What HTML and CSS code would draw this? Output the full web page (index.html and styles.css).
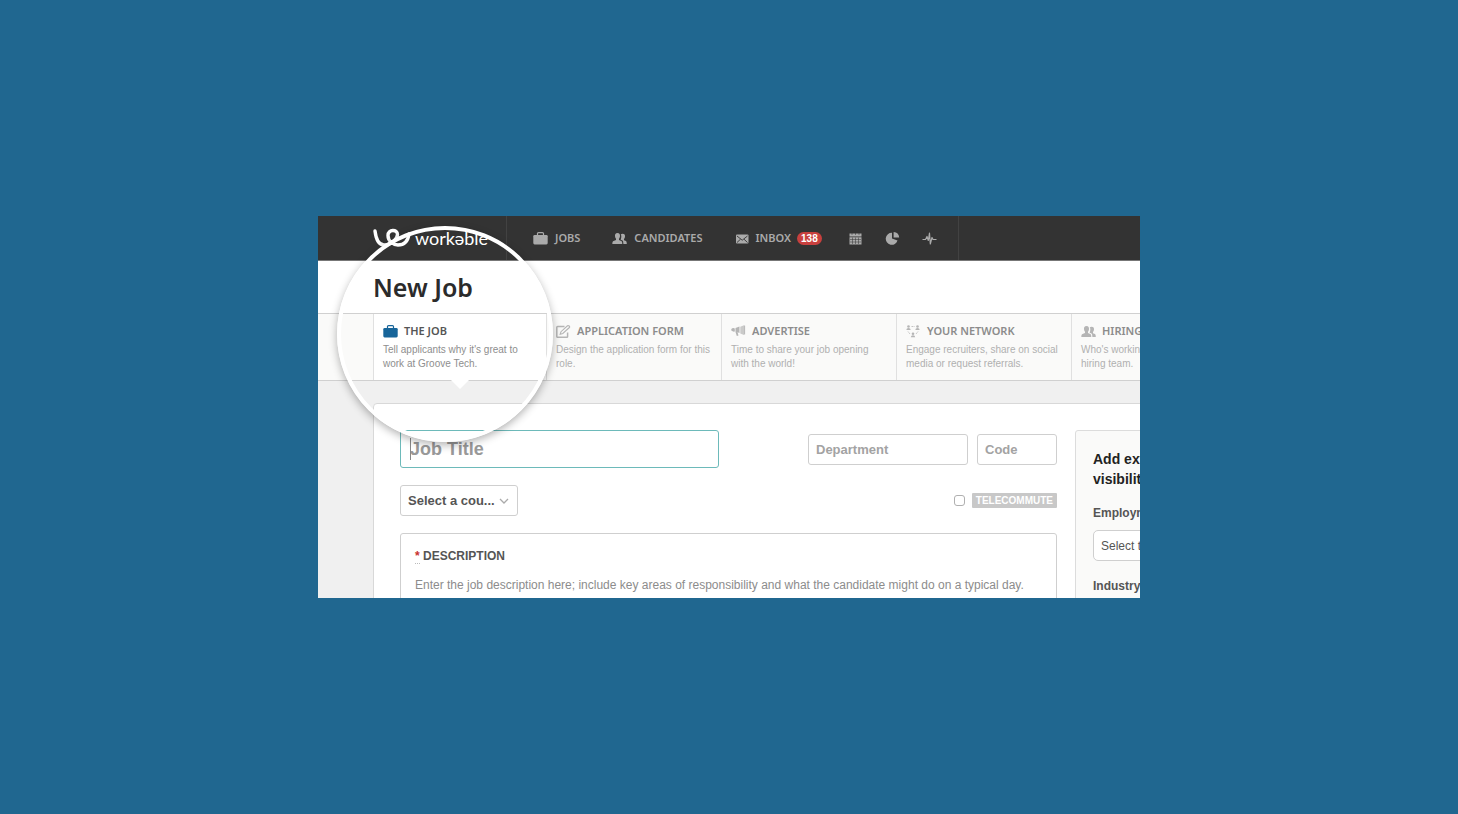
FILE: index.html
```html
<!DOCTYPE html>
<html lang="en">
<head>
<meta charset="utf-8">
<meta name="viewport" content="width=device-width, initial-scale=1">
<title>Workable – New Job</title>
<link rel="stylesheet" href="styles.css">
</head>
<body class="stage">
<svg class="sprite" aria-hidden="true">
  <symbol id="briefcase" viewBox="0 0 15 13"><path d="M4.500 3V1.600Q4.500.6 5.500.6H9.500Q10.500.6 10.500 1.600V3" fill="none" stroke="currentColor" stroke-width="1.200"/><rect x="0.300" y="3" width="14.400" height="9.400" rx="1.300" fill="currentColor"/></symbol>
  <symbol id="people" viewBox="0 0 15 13"><path fill="currentColor" d="M5.500 1C7.500 1 8.200 2.300 8 4.200C7.900 5.300 7.400 6.200 7 6.800V8L9.700 9.200Q10.300 9.600 10.300 12H.3Q.3 9.600 1 9.200L4 8V6.800C3.500 6.200 3.100 5.300 3 4.200C2.800 2.300 3.500 1 5.500 1ZM10.600 1.800C12.500 1.800 13.200 3 13 4.700C12.900 5.700 12.500 6.500 12 7V8.200L14 9.100Q14.800 9.600 14.800 12H11.400Q11.300 9.100 10.500 8.600L8.700 7.700V7.400C9 6.900 9.400 5.500 9.300 4Q9.200 2.800 8.700 2.400Q9.400 1.800 10.600 1.800Z"/></symbol>
  <symbol id="pencil" viewBox="0 0 15 13"><path d="M8.500 1.500H1.600Q.8 1.500 .8 2.300V11.500Q.8 12.300 1.600 12.300H10.800Q11.600 12.300 11.600 11.500V7.500" fill="none" stroke="currentColor" stroke-width="1.500"/><path d="M4.200 9.200L5 6.700L11.500.8Q12.300.3 13.200 1Q14 1.800 13.400 2.500L6.800 8.500Z" fill="none" stroke="currentColor" stroke-width="1.100"/></symbol>
</svg>
<main class="shot">
  <div class="app">
    <header class="topbar">
      <a class="brand" href="#">
        <svg class="brand-mark" viewBox="0 0 38 20" aria-hidden="true"><path d="M2 3C3 11 6 17 11 17C18 17 24.500 11 24.500 6.500C24.500 1 15 1 15 7.500C15 13 20 17 25 17C31 17 35 13 36 6" fill="none" stroke="currentColor" stroke-width="3.400" stroke-linecap="round"/></svg>
        <span>workəble</span>
      </a>
      <nav class="nav">
        <a class="nav-link" href="#"><svg class="icon"><use href="#briefcase"/></svg>JOBS</a>
        <a class="nav-link" href="#"><svg class="icon"><use href="#people"/></svg>CANDIDATES</a>
        <a class="nav-link" href="#"><svg class="icon" viewBox="0 0 15 13"><rect x="1" y="2.500" width="12.500" height="9" rx="1" fill="currentColor"/><path d="M2 4L7.200 8.200L12.500 4M2 10.500L5.500 7.200M12.500 10.500L9 7.200" fill="none" stroke="#333" stroke-width=".9"/></svg>INBOX<span class="badge">138</span></a>
        <a class="nav-tool" href="#" aria-label="Calendar"><svg class="icon" viewBox="0 0 15 13"><path d="M1.500 1.500H13.500V4.500H1.500ZM1.500 5.300H13.500V12.500H1.500Z" fill="currentColor"/><path d="M4 0V3M7.500 0V3M11 0V3M2 7.500H13M2 10H13M4.500 5.500V12M7.500 5.500V12M10.500 5.500V12" stroke="#333" stroke-width=".5"/></svg></a>
        <a class="nav-tool" href="#" aria-label="Reports"><svg class="icon" viewBox="0 0 15 13"><path d="M7 .8V6.500L12.500 8.500A6 6 0 1 1 7 .8Z" fill="currentColor"/><path d="M8.600 0A6 6 0 0 1 14.200 5.500H8.600Z" fill="currentColor"/></svg></a>
        <a class="nav-tool" href="#" aria-label="Activity"><svg class="icon" viewBox="0 0 15 13"><path d="M.5 7.500H3.500L5 4.500L6.300 8.500L7.500 1.200L8.300 12L10 5.500L11 7.500H14.500" fill="none" stroke="currentColor" stroke-width="1.200" stroke-linejoin="round"/></svg></a>
      </nav>
    </header>
    <h1 class="title">New Job</h1>
    <nav class="tabs" aria-label="Steps">
      <a class="tab tab-active" href="#"><strong class="tab-name"><svg class="icon"><use href="#briefcase"/></svg>THE JOB</strong><span class="tab-note">Tell applicants why it's great to work at Groove Tech.</span></a>
      <a class="tab" href="#"><strong class="tab-name"><svg class="icon"><use href="#pencil"/></svg>APPLICATION FORM</strong><span class="tab-note">Design the application form for this role.</span></a>
      <a class="tab" href="#"><strong class="tab-name"><svg class="icon" viewBox="0 0 15 13"><path d="M.3 4Q2 2.500 3.800 3.500V6.500Q2 7 .3 5.500ZM4.500 3L8.500 1.500V8L6.500 7.300L7.500 10.500L5.800 11L4.500 7Z" fill="currentColor"/><path d="M9.300 1.700L13 .3V10L9.300 8.500Z" fill="currentColor" opacity=".7"/><path d="M13.600.5V9.500" stroke="currentColor"/></svg>ADVERTISE</strong><span class="tab-note">Time to share your job opening with the world!</span></a>
      <a class="tab" href="#"><strong class="tab-name"><svg class="icon" viewBox="0 0 15 13"><g fill="currentColor"><circle cx="2.500" cy="1.500" r="1.300"/><path d="M.3 5Q.5 3 2.500 3T4.700 5Z"/><circle cx="11.500" cy="1.500" r="1.300"/><path d="M9.300 5Q9.500 3 11.500 3T13.700 5Z"/><circle cx="7" cy="8.800" r="1.300"/><path d="M4.800 12.300Q5 10.300 7 10.300T9.200 12.300Z"/></g><path d="M5.500 1.500H8.500M2 6.500L4 9M12 6.500L10 9" stroke="currentColor" stroke-width=".8" stroke-dasharray="1.500 .6"/></svg>YOUR NETWORK</strong><span class="tab-note">Engage recruiters, share on social media or request referrals.</span></a>
      <a class="tab" href="#"><strong class="tab-name"><svg class="icon"><use href="#people"/></svg>HIRING TEAM</strong><span class="tab-note">Who's working on this position's hiring team.</span></a>
    </nav>
    <form class="panel">
      <div class="fields">
        <div class="row">
          <div class="job-title"><input class="box box-title" type="text" placeholder="Job Title" aria-label="Job Title"><span class="caret"></span></div>
          <input class="box box-department" type="text" placeholder="Department" aria-label="Department">
          <input class="box box-code" type="text" placeholder="Code" aria-label="Code">
        </div>
        <div class="row row-country">
          <div class="picker"><select class="box box-country" aria-label="Country"><option>Select a cou...</option></select><svg class="chevron" viewBox="0 0 10 6" aria-hidden="true"><path d="M1 1L5 5L9 1" fill="none" stroke="currentColor" stroke-width="1.300"/></svg></div>
          <label class="remote"><input class="tick" type="checkbox"><span class="remote-tag">TELECOMMUTE</span></label>
        </div>
        <div class="description">
          <label class="description-name" for="description"><abbr class="required">*</abbr> DESCRIPTION</label>
          <textarea class="description-text" id="description" placeholder="Enter the job description here; include key areas of responsibility and what the candidate might do on a typical day."></textarea>
        </div>
      </div>
      <aside class="extras">
        <h2 class="extras-title">Add extra info for visibility</h2>
        <label class="extras-label" for="employment">Employment type</label>
        <select class="box extras-select" id="employment"><option>Select type</option></select>
        <label class="extras-label" for="industry">Industry</label>
        <select class="box extras-select" id="industry"><option>Select industry</option></select>
      </aside>
    </form>
  </div>
  <div class="lens"></div>
</main>
</body>
</html>
```
FILE: styles.css
```css
* { box-sizing: border-box; }

.stage {
  margin: 0;
  min-height: 100vh;
  display: flex;
  align-items: center;
  justify-content: center;
  background: #206790;
  font-family: "Liberation Sans", Arial, sans-serif;
  color: #555;
}

.sprite { position: absolute; width: 0; height: 0; }

.shot {
  position: relative;
  width: 100%;
  max-width: 822px;
  aspect-ratio: 822 / 382;
  overflow: hidden;
  background: #f0f0f0;
}

.app { min-width: 1000px; }
.icon { width: 15px; height: 13px; flex: none; }
a { color: inherit; text-decoration: none; }

/* top bar */
.topbar {
  display: flex;
  height: 45px;
  padding-left: 55px;
  background: #333;
  border-bottom: 1px solid #777;
  color: #aaa;
}
.brand {
  display: flex;
  align-items: center;
  gap: 4px;
  width: 134px;
  border-right: 1px solid #424242;
  color: #fff;
  font: 18px/20px Lato, sans-serif;
}
.brand-mark { width: 38px; height: 20px; }
.nav {
  display: flex;
  align-items: center;
  gap: 22px;
  padding: 0 21px 0 26px;
  border-right: 1px solid #424242;
  font: 600 11px/16px "Noto Sans", sans-serif;
}
.nav-link { display: flex; align-items: center; gap: 7px; margin-right: 10px; }
.nav-link:nth-child(3) { gap: 6px; margin-right: 4px; }
.nav-tool { display: flex; }
.badge {
  padding: 0 4px;
  border-radius: 7px;
  background: #c8403e;
  color: #fff;
  font: bold 10px/13px "Liberation Sans", sans-serif;
}

.title {
  margin: 0;
  padding: 10px 0 10px 55px;
  background: #fff;
  color: #2b2b2b;
  font: 600 25px/32px "Noto Sans", sans-serif;
}

/* step tabs */
.tabs {
  display: flex;
  padding-left: 55px;
  background: #fafaf9;
  border-top: 1px solid #d0d0d0;
  border-bottom: 1px solid #d0d0d0;
}
.tab {
  position: relative;
  flex: 0 0 175px;
  height: 66px;
  padding: 8px 9px;
  border-right: 1px solid #e0e0e0;
  color: #b0b0b0;
}
.tab-name {
  display: flex;
  align-items: center;
  gap: 6px;
  color: #8c8c8c;
  font: 600 11px/18px "Noto Sans", sans-serif;
}
.tab-name .icon { color: #b5b5b5; }
.tab-note { display: block; padding-top: 3px; font-size: 10px; line-height: 14px; }
.tab-active { flex-basis: 174px; background: #fff; border-left: 1px solid #e0e0e0; color: #8e8e8e; }
.tab-active .tab-name { color: #555; }
.tab-active .icon { color: #17659a; }
.tab-active::after {
  content: "";
  position: absolute;
  top: 100%;
  left: 50%;
  border: 9px solid transparent;
  border-top-color: #fff;
  border-bottom: 0;
  transform: translateX(-50%);
}

/* form */
.panel {
  display: flex;
  gap: 18px;
  margin: 22px 0 0 55px;
  padding: 26px;
  background: #fff;
  border: 1px solid #d8d8d8;
  border-radius: 4px;
}
.fields { width: 657px; flex: none; }
.row { display: flex; align-items: center; gap: 9px; }
.row-country { justify-content: space-between; padding: 17px 0; }
.box {
  border: 1px solid #cfcfcf;
  border-radius: 3px;
  background: #fff;
  color: #555;
  font: bold 13px/16px "Liberation Sans", Arial, sans-serif;
  height: 31px;
  padding: 0 7px;
  appearance: none;
}
.box::placeholder { color: #a3a3a3; opacity: 1; }
.job-title { position: relative; width: 319px; margin-right: auto; }
.box-title { display: block; width: 100%; height: 38px; padding: 0 9px; border-color: #6dbaba; font-size: 18px; line-height: 24px; }
.box-title::placeholder { color: #999; }
.caret { position: absolute; left: 10px; top: 8px; width: 1px; height: 22px; background: #888; }
.box-department { width: 160px; }
.box-code { width: 80px; }
.picker { position: relative; }
.box-country { display: block; width: 118px; }
.chevron { position: absolute; right: 9px; top: 13px; width: 10px; height: 6px; color: #aaa; }
.remote { display: flex; align-items: center; gap: 7px; }
.tick { appearance: none; width: 11px; height: 11px; margin: 0; border: 1px solid #b0b0b0; border-radius: 3px; background: #fff; }
.remote-tag { padding: 0 4px; border-radius: 1px; background: #c8c8c8; color: #fff; font: bold 10px/15px "Liberation Sans", sans-serif; }
.description { height: 120px; padding: 14px; border: 1px solid #cfcfcf; border-radius: 3px; }
.description-name { display: block; font: bold 12px/16px "Liberation Sans", sans-serif; }
.required { color: #c8302e; border-bottom: 1px dotted #bbb; }
.description-text {
  display: block;
  width: 100%;
  height: 60px;
  margin-top: 12px;
  padding: 0;
  border: 0;
  background: none;
  resize: none;
  white-space: nowrap;
  overflow: hidden;
  font: 12px/18px "Liberation Sans", Arial, sans-serif;
}
.description-text::placeholder { color: #8c8c8c; opacity: 1; }

.extras {
  width: 220px;
  flex: none;
  padding: 18px 17px;
  border: 1px solid #dcdcdc;
  border-radius: 3px;
  background: #fafaf9;
}
.extras-title { width: 150px; margin: 0 0 15px; color: #222; font: bold 14px/20px "Liberation Sans", sans-serif; }
.extras-label { display: block; padding-bottom: 8px; font: bold 12px/18px "Liberation Sans", sans-serif; }
.extras-select { display: block; width: 100%; margin-bottom: 16px; font-size: 12px; font-weight: normal; border-radius: 5px; }

/* highlight ring over the first step */
.lens {
  position: absolute;
  top: 10px;
  left: 19px;
  width: 216px;
  height: 216px;
  border: 4px solid #fff;
  border-radius: 50%;
  box-shadow: 0 3px 8px rgba(0, 0, 0, .3);
  pointer-events: none;
}
```
